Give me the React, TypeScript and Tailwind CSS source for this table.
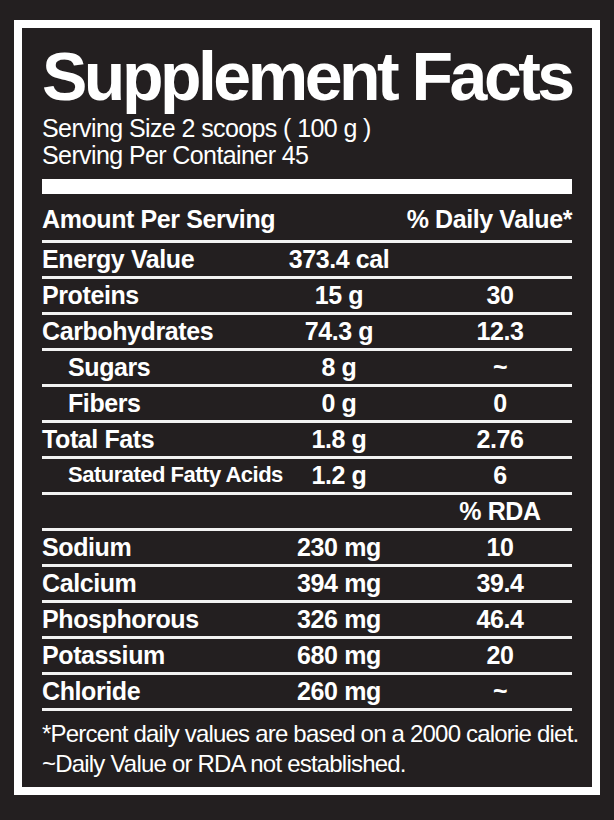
const rows = [
  { name: "Energy Value", amount: "373.4 cal", dv: "" },
  { name: "Proteins", amount: "15 g", dv: "30" },
  { name: "Carbohydrates", amount: "74.3 g", dv: "12.3" },
  { name: "Sugars", amount: "8 g", dv: "~", sub: true },
  { name: "Fibers", amount: "0 g", dv: "0", sub: true },
  { name: "Total Fats", amount: "1.8 g", dv: "2.76" },
  { name: "Saturated Fatty Acids", amount: "1.2 g", dv: "6", sub: true, small: true },
  { name: "", amount: "", dv: "% RDA" },
  { name: "Sodium", amount: "230 mg", dv: "10" },
  { name: "Calcium", amount: "394 mg", dv: "39.4" },
  { name: "Phosphorous", amount: "326 mg", dv: "46.4" },
  { name: "Potassium", amount: "680 mg", dv: "20" },
  { name: "Chloride", amount: "260 mg", dv: "~" },
];

function Rule() {
  return <div className="h-[3px] bg-[#f2f2f2]" />;
}

export default function App() {
  return (
    <div
      className="min-h-screen bg-[#231f20] pt-[20px] text-white"
      style={{ fontFamily: '"Liberation Sans", Arial, Helvetica, sans-serif' }}
    >
      <div className="ml-[14px] w-[586px] border-[8px] border-white bg-[#231f20] px-5 pt-[14px] pb-[8px]">
        {/* Title block */}
        <h1 className="text-[68px] font-bold leading-none tracking-[-3.5px] whitespace-nowrap">
          Supplement Facts
        </h1>
        <div className="mt-[5px] text-[25px] leading-[27px] tracking-[-0.6px]">
          <p>Serving Size 2 scoops ( 100 g )</p>
          <p>Serving Per Container 45</p>
        </div>
        <div className="mt-[10px] h-[15px] bg-white" />

        {/* Header */}
        <div className="flex justify-between pt-[13px] pb-[9px] text-[25px] font-bold leading-[24px] tracking-[-0.4px]">
          <span>Amount Per Serving</span>
          <span>% Daily Value*</span>
        </div>
        <Rule />

        {/* Nutrient rows */}
        {rows.map((r, i) => (
          <div key={i}>
            <div className="grid grid-cols-[208px_178px_1fr] pt-[4px] pb-[5px] text-[25px] font-bold leading-[24px] tracking-[-0.4px]">
              <span
                className={`whitespace-nowrap ${r.sub ? "pl-[26px]" : ""} ${
                  r.small ? "text-[22px] tracking-[-0.5px]" : ""
                }`}
              >
                {r.name}
              </span>
              <span className="text-center whitespace-nowrap">{r.amount}</span>
              <span className="text-center whitespace-nowrap">{r.dv}</span>
            </div>
            <Rule />
          </div>
        ))}

        {/* Footnotes */}
        <div className="mt-[8px] text-[24px] leading-[30px] tracking-[-0.8px] whitespace-nowrap">
          <p>*Percent daily values are based on a 2000 calorie diet.</p>
          <p>~Daily Value or RDA not established.</p>
        </div>
      </div>
    </div>
  );
}
